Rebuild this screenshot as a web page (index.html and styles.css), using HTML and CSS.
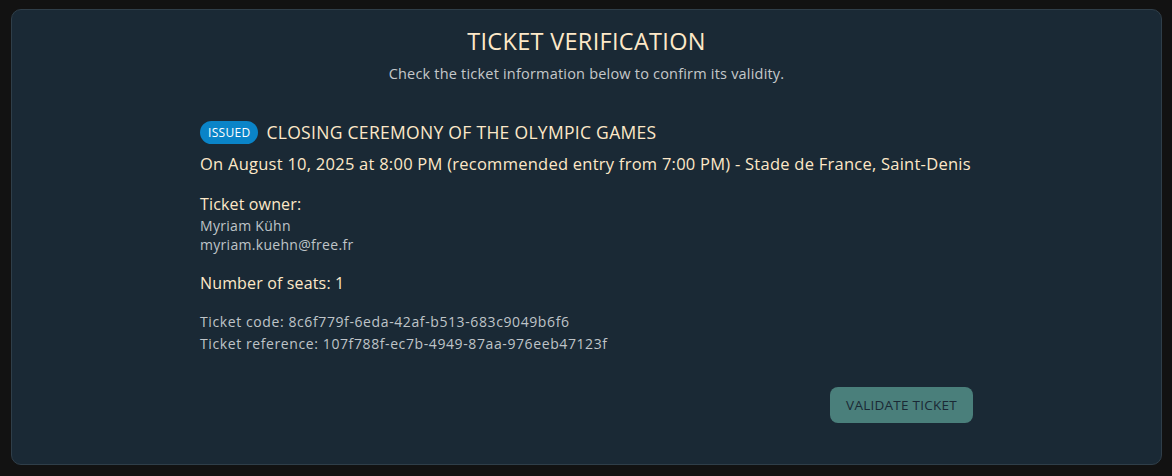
FILE: index.html
```html
<!DOCTYPE html>
<html lang="en">
<head>
<meta charset="utf-8">
<title>Ticket verification</title>
<link rel="stylesheet" href="styles.css">
</head>
<body>
<main class="card">
  <h1 class="title">TICKET VERIFICATION</h1>
  <p class="subtitle">Check the ticket information below to confirm its validity.</p>
  <section class="content">
    <div class="event-row">
      <span class="badge">ISSUED</span>
      <h2 class="event-name">CLOSING CEREMONY OF THE OLYMPIC GAMES</h2>
    </div>
    <p class="event-date">On August 10, 2025 at 8:00 PM (recommended entry from 7:00 PM) - Stade de France, Saint-Denis</p>
    <h3 class="label owner-label">Ticket owner:</h3>
    <p class="owner-line">Myriam Kühn</p>
    <p class="owner-line">myriam.kuehn@free.fr</p>
    <h3 class="label seats">Number of seats: 1</h3>
    <div class="codes">
      <p class="code-line">Ticket code: 8c6f779f-6eda-42af-b513-683c9049b6f6</p>
      <p class="code-line">Ticket reference: 107f788f-ec7b-4949-87aa-976eeb47123f</p>
    </div>
    <div class="actions">
      <button class="validate" type="button">VALIDATE TICKET</button>
    </div>
  </section>
</main>
</body>
</html>
```
FILE: styles.css
```css
* { box-sizing: border-box; }
html, body { margin: 0; padding: 0; }
body {
  background: #121212;
  font-family: "Open Sans", "DejaVu Sans", sans-serif;
  width: 1172px;
  height: 476px;
  overflow: hidden;
}
.card {
  margin: 9px 0 0 11px;
  width: 1151px;
  height: 456px;
  background: #1a2935;
  border: 1px solid #2f3e49;
  border-radius: 10px;
  padding: 15px 0 0;
}
.title {
  margin: 0;
  text-align: center;
  font-weight: 400;
  font-size: 23.5px;
  letter-spacing: 0.3px;
  line-height: 32px;
  color: #fde8c8;
}
.subtitle {
  margin: 7px 0 0;
  text-align: center;
  font-size: 14.5px;
  letter-spacing: 0.2px;
  line-height: 20px;
  color: #c5c8ca;
}
.content {
  width: 773px;
  margin: 36px auto 0;
}
.event-row {
  display: flex;
  align-items: center;
  gap: 8px;
  height: 24px;
}
.badge {
  background: #0a84c8;
  color: #ffffff;
  font-size: 12px;
  letter-spacing: 0.3px;
  line-height: 23px;
  height: 23px;
  padding: 0 8px;
  border-radius: 12px;
}
.event-name {
  margin: 0;
  font-weight: 400;
  font-size: 17.5px;
  letter-spacing: 0.3px;
  line-height: 24px;
  color: #fde8c8;
}
.event-date {
  margin: 8px 0 0;
  font-size: 16.5px;
  letter-spacing: 0.25px;
  line-height: 24px;
  color: #fde8c8;
}
.label {
  margin: 0;
  font-weight: 400;
  font-size: 16px;
  letter-spacing: 0.15px;
  line-height: 24px;
  color: #fde8c8;
}
.owner-label { margin-top: 16px; }
.owner-line {
  margin: 0;
  font-size: 14px;
  letter-spacing: 0.3px;
  line-height: 19px;
  color: #bfc4c8;
}
.seats { margin-top: 17px; }
.codes { margin-top: 16px; }
.code-line {
  margin: 0;
  font-size: 14px;
  letter-spacing: 0.6px;
  line-height: 22px;
  color: #bfc4c8;
}
.actions {
  display: flex;
  justify-content: flex-end;
  margin-top: 32px;
}
.validate {
  font-family: inherit;
  background: #4a7f7b;
  color: #1a2935;
  border: 0;
  border-radius: 8px;
  height: 36px;
  width: 143px;
  font-size: 13.5px;
  letter-spacing: 0.25px;
  padding: 0;
}
```
